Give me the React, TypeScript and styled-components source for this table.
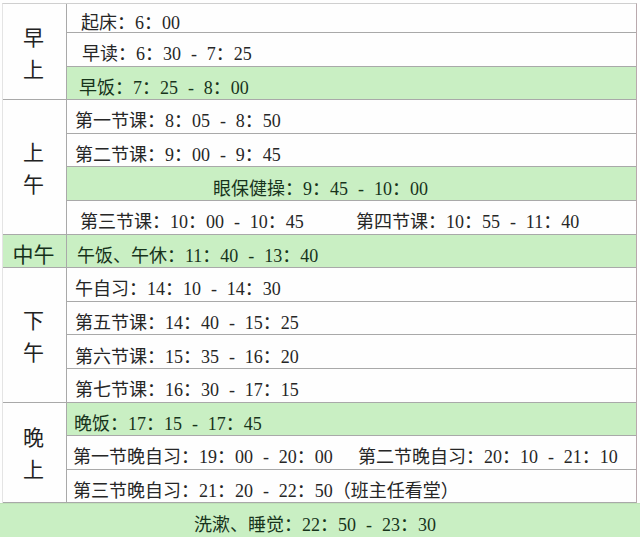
import React from "react";
import styled, { createGlobalStyle } from "styled-components";

const GlobalStyle = createGlobalStyle`
  html, body {
    margin: 0;
    padding: 0;
    background: #fefefe;
  }
  * { box-sizing: border-box; }
`;

const GREEN = "#c9efc3";
const LINE = "#a9a9a9";

const Page = styled.div`
  width: 640px;
  height: 537px;
  overflow: hidden;
  padding: 3px 3px 0 2px;
  background: #fefefe;
  font-family: "Liberation Serif", "Noto Sans CJK SC", serif;
`;

const Table = styled.div`
  display: grid;
  grid-template-columns: 64px 1fr;
  grid-template-rows: 29px repeat(15, 1fr);
  width: 635px;
  height: 534px;
  border-top: 1px solid #cfcfcf;
  border-left: 1px solid #e4e4e4;
  border-right: 1px solid #b9a9ad;
`;

const Label = styled.div<{ $start: number; $span: number; $green?: boolean }>`
  grid-column: 1;
  grid-row: ${(p) => p.$start} / span ${(p) => p.$span};
  display: flex;
  flex-direction: ${(p) => (p.$span > 1 ? "column" : "row")};
  align-items: center;
  justify-content: center;
  padding-top: ${(p) => (p.$span > 1 ? 0 : 4)}px;
  padding-right: 2px;
  background: ${(p) => (p.$green ? GREEN : "#fefefe")};
  border-right: 1px solid ${LINE};
  border-bottom: 1px solid ${LINE};
  font-family: "Noto Sans CJK SC", sans-serif;
  font-size: 21px;
  line-height: ${(p) => (p.$span > 1 ? "32px" : "24px")};
  color: ${(p) => (p.$green ? "#15301a" : "#222")};
`;

const LabelChar = styled.span`
  display: block;
`;

const Cell = styled.div<{ $green?: boolean; $indent?: number; $center?: boolean }>`
  grid-column: 2;
  display: flex;
  align-items: center;
  justify-content: ${(p) => (p.$center ? "center" : "flex-start")};
  padding: 10px ${(p) => (p.$center ? 70 : 0)}px 0 ${(p) => p.$indent ?? 8}px;
  background: ${(p) => (p.$green ? GREEN : "#fefefe")};
  border-bottom: 1px solid ${LINE};
  font-size: 18px;
  line-height: 22px;
  word-spacing: 0.3em;
  white-space: nowrap;
  color: ${(p) => (p.$green ? "#17331b" : "#262626")};
`;

const Footer = styled(Cell)`
  grid-column: 1 / -1;
  justify-content: center;
  padding: 8px 10px 0 0;
  margin-right: -4px;
  margin-left: -3px;
  border-bottom: none;
  border-top: 1px solid #bfe3b8;
`;

const Pair = styled.div<{ $split: number }>`
  display: grid;
  grid-template-columns: ${(p) => p.$split}px auto;
`;

type Item = { text: string; green?: boolean; indent?: number; center?: boolean; second?: string; split?: number };

const morning: Item[] = [
  { text: "起床：6：00", indent: 14 },
  { text: "早读：6：30 - 7：25", indent: 15 },
  { text: "早饭：7：25 - 8：00", green: true, indent: 12 },
];

const forenoon: Item[] = [
  { text: "第一节课：8：05 - 8：50", indent: 8 },
  { text: "第二节课：9：00 - 9：45", indent: 8 },
  { text: "眼保健操：9：45 - 10：00", green: true, center: true },
  { text: "第三节课：10：00 - 10：45", indent: 13, second: "第四节课：10：55 - 11：40", split: 276 },
];

const noon: Item[] = [{ text: "午饭、午休：11：40 - 13：40", green: true, indent: 10 }];

const afternoon: Item[] = [
  { text: "午自习：14：10 - 14：30", indent: 8 },
  { text: "第五节课：14：40 - 15：25", indent: 8 },
  { text: "第六节课：15：35 - 16：20", indent: 8 },
  { text: "第七节课：16：30 - 17：15", indent: 8 },
];

const evening: Item[] = [
  { text: "晚饭：17：15 - 17：45", green: true, indent: 7 },
  { text: "第一节晚自习：19：00 - 20：00", indent: 6, second: "第二节晚自习：20：10 - 21：10", split: 285 },
  { text: "第三节晚自习：21：20 - 22：50（班主任看堂）", indent: 6 },
];

const groups: { label: string; green?: boolean; items: Item[] }[] = [
  { label: "早上", items: morning },
  { label: "上午", items: forenoon },
  { label: "中午", green: true, items: noon },
  { label: "下午", items: afternoon },
  { label: "晚上", items: evening },
];

export default function App() {
  let row = 1;
  const cells: React.ReactNode[] = [];
  const labels: React.ReactNode[] = [];
  groups.forEach((g, gi) => {
    const span = g.items.length;
    labels.push(
      <Label key={`l${gi}`} $start={row} $span={span} $green={g.green}>
        {span > 1 ? g.label.split("").map((c, i) => <LabelChar key={i}>{c}</LabelChar>) : g.label}
      </Label>
    );
    g.items.forEach((it, ii) => {
      cells.push(
        <Cell key={`c${gi}-${ii}`} $green={it.green} $indent={it.indent} $center={it.center} style={{ gridRow: row + ii }}>
          {it.second ? (
            <Pair $split={it.split ?? 280}>
              <span>{it.text}</span>
              <span>{it.second}</span>
            </Pair>
          ) : (
            it.text
          )}
        </Cell>
      );
    });
    row += span;
  });

  return (
    <Page>
      <GlobalStyle />
      <Table>
        {labels}
        {cells}
        <Footer $green style={{ gridRow: row }}>
          洗漱、睡觉：22：50 - 23：30
        </Footer>
      </Table>
    </Page>
  );
}
